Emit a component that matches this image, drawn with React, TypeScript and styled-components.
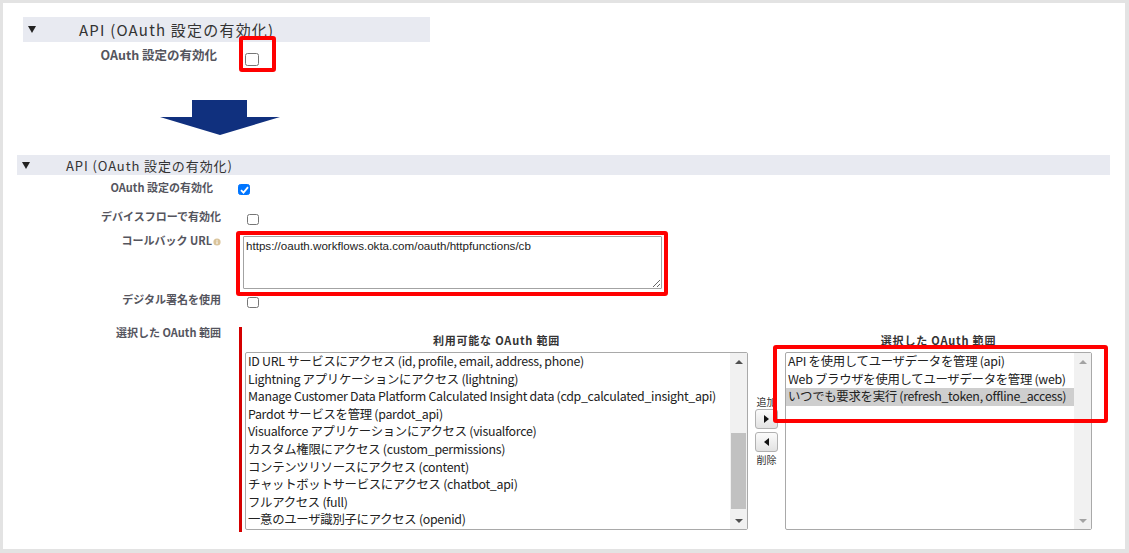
import React from 'react';
import styled, { createGlobalStyle } from 'styled-components';

const GlobalStyle = createGlobalStyle`
  html, body {
    margin: 0;
    padding: 0;
  }
  body {
    background: #e3e3e3;
    font-family: "Noto Sans CJK JP", "Liberation Sans", sans-serif;
    color: #333;
  }
`;

const Frame = styled.div`
  box-sizing: border-box;
  width: 1122px;
  height: 546px;
  margin: 3px 0 0 3px;
  padding-top: 14px;
  background: #fff;
  overflow: hidden;
`;

const TopSection = styled.section`
  margin-left: 20px;
  width: 407px;
`;

const SectionHeader = styled.div<{ $height: number; $size: number; $gap: number; $spacing: number }>`
  display: flex;
  align-items: center;
  height: ${p => p.$height}px;
  padding-left: 5px;
  background: #e8eaf1;
  font-size: ${p => p.$size}px;
  letter-spacing: ${p => p.$spacing}px;
  color: #333;
  white-space: nowrap;

  span:last-child {
    margin-left: ${p => p.$gap}px;
  }
`;

const Caret = styled.span`
  width: 0;
  height: 0;
  border-left: 4.5px solid transparent;
  border-right: 4.5px solid transparent;
  border-top: 7px solid #222;
`;

const TopRow = styled.div`
  display: grid;
  grid-template-columns: 194px auto;
  column-gap: 28px;
  height: 26px;
  padding-top: 5px;
  box-sizing: border-box;
`;

const Label = styled.div<{ $size: number; $inset?: number }>`
  text-align: right;
  font-size: ${p => p.$size}px;
  line-height: 16px;
  font-weight: bold;
  color: #55555e;
  white-space: nowrap;
  padding-right: ${p => p.$inset || 0}px;
`;

const Control = styled.div<{ $top: number; $left?: number }>`
  position: relative;
  padding-top: ${p => p.$top}px;
  padding-left: ${p => p.$left || 0}px;
`;

const Box = styled.span<{ $size: number; $checked?: boolean }>`
  display: flex;
  align-items: center;
  justify-content: center;
  box-sizing: border-box;
  width: ${p => p.$size}px;
  height: ${p => p.$size - 1}px;
  border-radius: 2.5px;
  border: 1px solid ${p => (p.$checked ? '#0075ff' : '#767676')};
  background: ${p => (p.$checked ? '#0075ff' : '#fff')};
`;

const Highlight = styled.div<{ $l: number; $t: number; $w: number; $h: number }>`
  position: absolute;
  left: ${p => p.$l}px;
  top: ${p => p.$t}px;
  width: ${p => p.$w}px;
  height: ${p => p.$h}px;
  box-sizing: border-box;
  border: 4px solid #ff0000;
  border-radius: 3px;
  pointer-events: none;
`;

const ArrowDown = styled.svg`
  display: block;
  margin: 32px 0 0 157px;
`;

const MainSection = styled.section`
  margin: 20px 0 0 14px;
  width: 1093px;
`;

const Form = styled.div`
  padding-top: 4px;
`;

const FormRow = styled.div<{ $height?: number }>`
  display: grid;
  grid-template-columns: 218px 1fr;
  column-gap: 17px;
  height: ${p => (p.$height ? `${p.$height}px` : 'auto')};
`;

const InfoDot = styled.svg`
  margin-left: 1px;
  vertical-align: -1px;
`;

const UrlField = styled.textarea`
  display: block;
  box-sizing: border-box;
  width: 419px;
  height: 53px;
  margin: 0;
  padding: 2px 2px;
  border: 1px solid #a3a3a3;
  border-radius: 1px;
  font-family: "Liberation Sans", "Noto Sans CJK JP", sans-serif;
  font-size: 11.6px;
  line-height: 14px;
  color: #222;
  resize: both;
  outline: none;
`;

const ScopeArea = styled.div`
  display: grid;
  grid-template-columns: 503px 23px 307px;
  grid-template-rows: 25px 178px;
  column-gap: 7px;
  height: 205px;
  box-sizing: border-box;
  margin-left: 1px;
  padding-left: 3px;
  border-left: 3px solid #d40000;
`;

const ListTitle = styled.div`
  padding-top: 5px;
  text-align: center;
  font-size: 11px;
  line-height: 16px;
  font-weight: bold;
  letter-spacing: 0.8px;
  color: #333;
  white-space: nowrap;
`;

const ListBox = styled.div`
  position: relative;
  display: flex;
  box-sizing: border-box;
  height: 178px;
  border: 1px solid #a9a9a9;
  border-radius: 2px;
  background: #fff;
`;

const Items = styled.div`
  flex: 1;
  overflow: hidden;
`;

const Item = styled.div<{ $selected?: boolean }>`
  padding-left: 2px;
  font-size: 12.4px;
  line-height: 17.6px;
  letter-spacing: -0.3px;
  color: #222;
  white-space: nowrap;
  background: ${p => (p.$selected ? '#cecece' : 'transparent')};
`;

const ScrollBar = styled.div`
  display: flex;
  flex-direction: column;
  width: 17px;
  background: #f1f1f1;
`;

const ScrollArrow = styled.div<{ $down?: boolean; $dim?: boolean }>`
  display: flex;
  align-items: center;
  justify-content: center;
  height: 17px;

  &::after {
    content: '';
    width: 0;
    height: 0;
    border-left: 4px solid transparent;
    border-right: 4px solid transparent;
    ${p => (p.$down ? 'border-top' : 'border-bottom')}: 4px solid ${p => (p.$dim ? '#a3a3a3' : '#505050')};
  }
`;

const Track = styled.div`
  flex: 1;
  padding: 0 1px;
`;

const Thumb = styled.div<{ $offset: number; $size: number }>`
  margin-top: ${p => p.$offset}px;
  height: ${p => p.$size}px;
  background: #c1c1c1;
`;

const Mover = styled.div`
  grid-row: 2;
  grid-column: 2;
  display: flex;
  flex-direction: column;
  align-items: center;
  padding-top: 44px;
  font-size: 10px;
  line-height: 12px;
  color: #333;
`;

const MoveButton = styled.div<{ $dir: 'add' | 'remove' }>`
  display: flex;
  align-items: center;
  justify-content: center;
  box-sizing: border-box;
  width: 23px;
  height: 20px;
  margin: ${p => (p.$dir === 'add' ? '1px 0 3px' : '0 0 2px')};
  border: 1px solid #b1b1b1;
  border-radius: 3px;
  background: linear-gradient(#fbfbfb, #e2e2e2);

  &::after {
    content: '';
    width: 0;
    height: 0;
    border-top: 4px solid transparent;
    border-bottom: 4px solid transparent;
    ${p => (p.$dir === 'add' ? 'border-left' : 'border-right')}: 5px solid #111;
  }
`;

const available = [
  'ID URL サービスにアクセス (id, profile, email, address, phone)',
  'Lightning アプリケーションにアクセス (lightning)',
  'Manage Customer Data Platform Calculated Insight data (cdp_calculated_insight_api)',
  'Pardot サービスを管理 (pardot_api)',
  'Visualforce アプリケーションにアクセス (visualforce)',
  'カスタム権限にアクセス (custom_permissions)',
  'コンテンツリソースにアクセス (content)',
  'チャットボットサービスにアクセス (chatbot_api)',
  'フルアクセス (full)',
  '一意のユーザ識別子にアクセス (openid)',
];

const selected = [
  'API を使用してユーザデータを管理 (api)',
  'Web ブラウザを使用してユーザデータを管理 (web)',
  'いつでも要求を実行 (refresh_token, offline_access)',
];

const CheckBox = ({ size = 12, checked = false }: { size?: number; checked?: boolean }) => (
  <Box $size={size} $checked={checked}>
    {checked && (
      <svg width="9" height="8" viewBox="0 0 9 8">
        <path d="M1 4.2 L3.5 6.6 L8 1.2" fill="none" stroke="#fff" strokeWidth="1.8" />
      </svg>
    )}
  </Box>
);

export default function App() {
  return (
    <>
      <GlobalStyle />
      <Frame>
        <TopSection>
          <SectionHeader $height={25} $size={15} $gap={43} $spacing={1.2}>
            <Caret />
            <span>API (OAuth 設定の有効化)</span>
          </SectionHeader>
          <TopRow>
            <Label $size={12.5}>OAuth 設定の有効化</Label>
            <Control $top={6}>
              <CheckBox size={14} />
              <Highlight $l={-6} $t={-11} $w={37} $h={36} />
            </Control>
          </TopRow>
        </TopSection>

        <ArrowDown width="120" height="35" viewBox="0 0 120 35">
          <polygon points="32,0 87,0 87,17 120,17 60,35 0,17 32,17" fill="#10307e" />
        </ArrowDown>

        <MainSection>
          <SectionHeader $height={20} $size={13} $gap={36} $spacing={0.9}>
            <Caret />
            <span>API (OAuth 設定の有効化)</span>
          </SectionHeader>
        </MainSection>

        <Form>
          <FormRow $height={29}>
            <Label $size={11} $inset={8}>OAuth 設定の有効化</Label>
            <Control $top={5}>
              <CheckBox checked />
            </Control>
          </FormRow>
          <FormRow $height={24}>
            <Label $size={11}>デバイスフローで有効化</Label>
            <Control $top={6} $left={9}>
              <CheckBox />
            </Control>
          </FormRow>
          <FormRow $height={59}>
            <Label $size={11}>
              コールバック URL
              <InfoDot width="8" height="8" viewBox="0 0 8 8">
                <circle cx="4" cy="4" r="3.6" fill="#d9c39a" />
                <rect x="3.5" y="3.3" width="1" height="2.8" fill="#fff" />
                <rect x="3.5" y="1.8" width="1" height="1" fill="#fff" />
              </InfoDot>
            </Label>
            <Control $top={4} $left={5}>
              <UrlField readOnly defaultValue="https://oauth.workflows.okta.com/oauth/httpfunctions/cb" />
              <Highlight $l={-2} $t={-1} $w={432} $h={65} />
            </Control>
          </FormRow>
          <FormRow $height={33}>
            <Label $size={11}>デジタル署名を使用</Label>
            <Control $top={6} $left={9}>
              <CheckBox />
            </Control>
          </FormRow>
          <FormRow>
            <Label $size={11}>選択した OAuth 範囲</Label>
            <Control $top={3}>
              <ScopeArea>
                <ListTitle>利用可能な OAuth 範囲</ListTitle>
                <div />
                <ListTitle>選択した OAuth 範囲</ListTitle>

                <ListBox>
                  <Items>
                    {available.map(t => (
                      <Item key={t}>{t}</Item>
                    ))}
                  </Items>
                  <ScrollBar>
                    <ScrollArrow />
                    <Track>
                      <Thumb $offset={63} $size={76} />
                    </Track>
                    <ScrollArrow $down />
                  </ScrollBar>
                </ListBox>

                <Mover>
                  追加
                  <MoveButton $dir="add" />
                  <MoveButton $dir="remove" />
                  削除
                </Mover>

                <ListBox>
                  <Items>
                    {selected.map((t, i) => (
                      <Item key={t} $selected={i === 2}>
                        {t}
                      </Item>
                    ))}
                  </Items>
                  <ScrollBar>
                    <ScrollArrow $dim />
                    <Track />
                    <ScrollArrow $down $dim />
                  </ScrollBar>
                  <Highlight $l={-13} $t={-8} $w={335} $h={78} />
                </ListBox>
              </ScopeArea>
            </Control>
          </FormRow>
        </Form>
      </Frame>
    </>
  );
}
